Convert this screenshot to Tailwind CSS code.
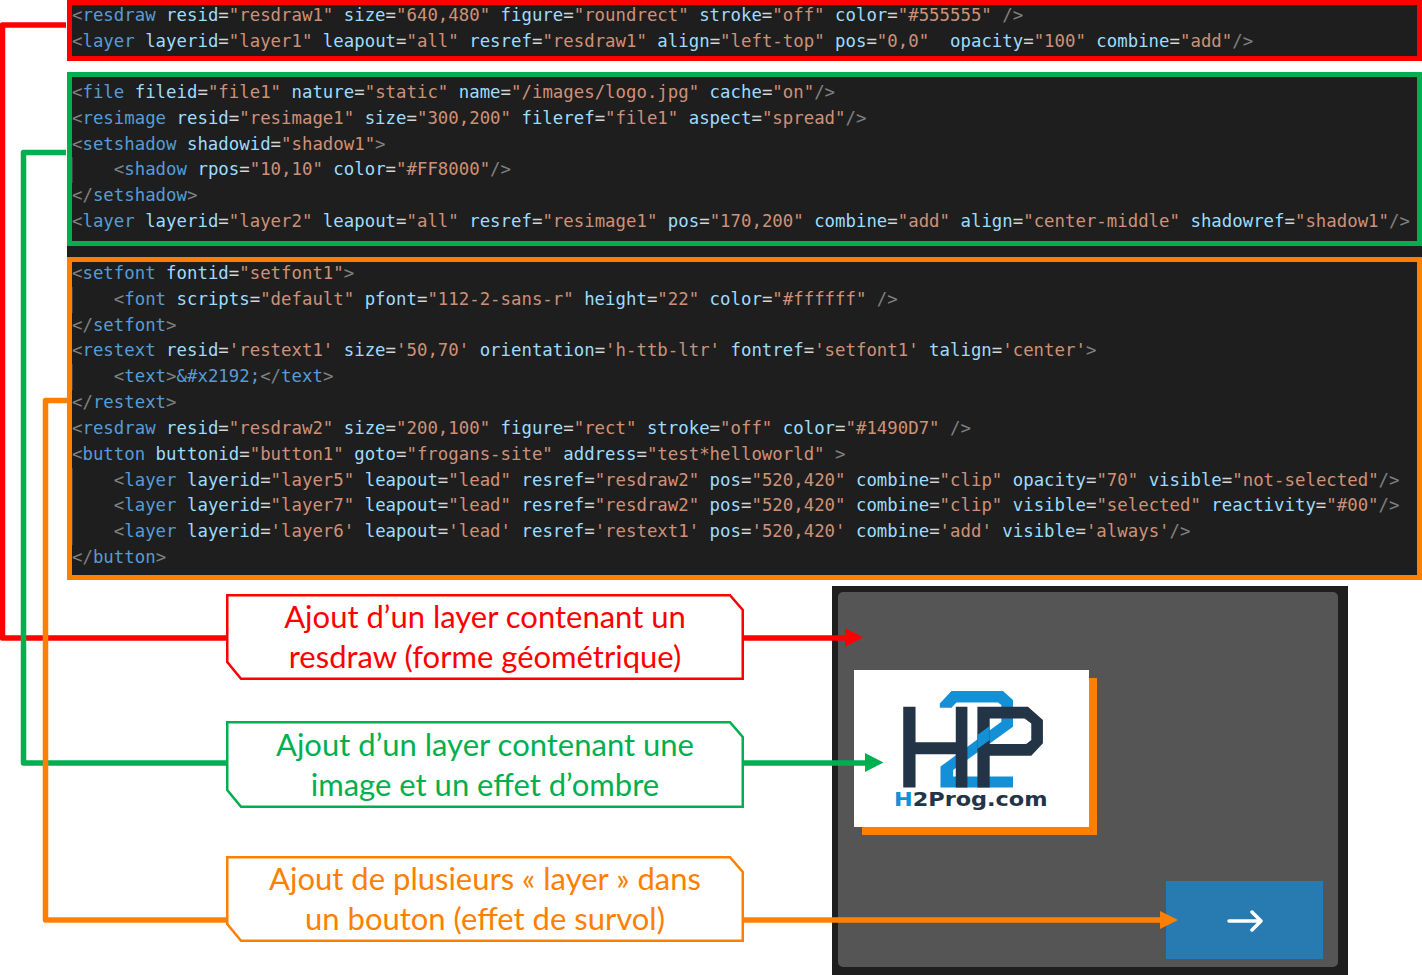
<!DOCTYPE html>
<html lang="fr">
<head>
    <meta charset="UTF-8">
    <title>Frogans layers</title>
    <script src="https://cdn.jsdelivr.net/npm/@tailwindcss/browser@4"></script>
</head>
<body class="bg-white h-screen overflow-hidden">
<div class="relative w-[1422px] h-[975px]">

    <!-- Blocs de code -->
    <div class="ml-[67px] font-['DejaVu_Sans_Mono',monospace] text-[17.38px] text-[#9cdcfe]">
        <div class="h-[61px] border-[5px] border-[#ff0000] bg-[#1e1e1e] overflow-hidden">
            <div id="codeRed" class="-mt-[3px] leading-[26px]"></div>
        </div>
        <div class="mt-[11px] bg-[#1e1e1e] h-[508px]">
            <div class="h-[174px] border-[5px] border-[#00b050] pt-[3px]">
                <div id="codeGreen" class="leading-[25.8px]"></div>
            </div>
            <div class="mt-[11px] h-[323px] border-[5px] border-[#ff8000]">
                <div id="codeOrange" class="-mt-[1px] leading-[25.82px]"></div>
            </div>
        </div>
    </div>

    <div class="flex">
        <!-- Légendes -->
        <div class="ml-[226px] w-[518px] pt-[14px] font-['Lato',sans-serif] text-[31px] leading-[40px] text-center">
            <div class="relative h-[86px] flex items-center justify-center text-[#ff0000]">
                <svg class="absolute inset-0 w-full h-full" viewBox="0 0 518 86"><polygon points="1.25,1.25 504,1.25 516.75,16 516.75,84.75 15,84.75 1.25,68" fill="#fff" stroke="#ff0000" stroke-width="2.5"/></svg>
                <p class="relative -mt-[2px]">Ajout d’un layer contenant un<br>resdraw (forme géométrique)</p>
            </div>
            <div class="relative h-[87px] mt-[41px] flex items-center justify-center text-[#00b050]">
                <svg class="absolute inset-0 w-full h-full" viewBox="0 0 518 87"><polygon points="1.25,1.25 504,1.25 516.75,16 516.75,85.75 15,85.75 1.25,69" fill="#fff" stroke="#00b050" stroke-width="2.5"/></svg>
                <p class="relative -mt-[2px]">Ajout d’un layer contenant une<br>image et un effet d’ombre</p>
            </div>
            <div class="relative h-[86px] mt-[48px] flex items-center justify-center text-[#ff8000]">
                <svg class="absolute inset-0 w-full h-full" viewBox="0 0 518 86"><polygon points="1.25,1.25 504,1.25 516.75,16 516.75,84.75 15,84.75 1.25,68" fill="#fff" stroke="#ff8000" stroke-width="2.5"/></svg>
                <p class="relative -mt-[2px]">Ajout de plusieurs « layer » dans<br>un bouton (effet de survol)</p>
            </div>
        </div>

        <!-- Rendu -->
        <div class="ml-[88px] mt-[6px] w-[516px] h-[389px] bg-[#1e1e1e] pt-[6px] pl-[6px]">
            <div class="w-[500px] h-[375px] bg-[#555555] rounded-[5px] flex flex-col justify-between pt-[78px] pl-[16px] pr-[15px] pb-[8px]">
                <div class="w-[234.5px] h-[157px] bg-white shadow-[8px_8px_0_#ff8000]">
                    <svg class="w-full h-full" viewBox="0 0 235 157">
                        <g transform="translate(41 15) scale(.3333)">
                            <path fill="#1490d7" d="M135 55 L170 18 H325 L355 45 V125 L175 255 V275 H355 V308 H137 V245 L320 110 V60 L310 52 H185 L170 68 H135 Z"/>
                            <path fill="#243447" d="M25 65 H62 V172 H183 V65 H218 V308 H183 V208 H62 V308 H25 Z"/>
                            <path fill="#243447" d="M248 65 H400 L445 105 V175 L410 212 H285 V308 H248 Z M285 100 V177 H395 L410 165 V115 L390 100 Z" fill-rule="evenodd"/>
                            <path fill="#1490d7" d="M248 150 L285 123 V165 L248 192 Z"/>
                        </g>
                        <text x="40" y="136.5" font-family="DejaVu Sans" font-weight="700" font-size="19" textLength="154" lengthAdjust="spacingAndGlyphs" fill="#243447"><tspan fill="#1490d7">H</tspan>2Prog.com</text>
                    </svg>
                </div>
                <div class="self-end w-[157px] h-[78px] bg-[#287bb0] flex items-center justify-center">
                    <svg class="w-[36px] h-[22px] mt-[2px]" viewBox="0 0 36 22" fill="none" stroke="#fff" stroke-width="3.5" stroke-linecap="round" stroke-linejoin="round">
                        <path d="M2 11 H34 M25 2 L34 11 L25 20"/>
                    </svg>
                </div>
            </div>
        </div>
    </div>

    <!-- Connecteurs et flèches -->
    <svg class="absolute inset-0 w-[1422px] h-[975px] pointer-events-none" viewBox="0 0 1422 975" fill="none" stroke-width="5.5" stroke-linejoin="round">
        <path stroke="#ff0000" d="M66 25 H2.5 V638 H226 M744 638 H850"/>
        <polygon fill="#ff0000" points="845,628 863,637.5 845,647"/>
        <path stroke="#00b050" d="M66 152.5 H23.5 V763 H226 M744 763 H870"/>
        <polygon fill="#00b050" points="865,753 883.5,762.5 865,772"/>
        <path stroke="#ff8000" d="M67 400.5 H45.5 V920 H226 M744 920 H1165"/>
        <polygon fill="#ff8000" points="1160,911 1178,920 1160,929"/>
    </svg>
</div>

<script>
    const codeRed = [
        `<resdraw resid="resdraw1" size="640,480" figure="roundrect" stroke="off" color="#555555" />`,
        `<layer layerid="layer1" leapout="all" resref="resdraw1" align="left-top" pos="0,0"  opacity="100" combine="add"/>`
    ];
    const codeGreen = [
        `<file fileid="file1" nature="static" name="/images/logo.jpg" cache="on"/>`,
        `<resimage resid="resimage1" size="300,200" fileref="file1" aspect="spread"/>`,
        `<setshadow shadowid="shadow1">`,
        `    <shadow rpos="10,10" color="#FF8000"/>`,
        `</setshadow>`,
        `<layer layerid="layer2" leapout="all" resref="resimage1" pos="170,200" combine="add" align="center-middle" shadowref="shadow1"/>`
    ];
    const codeOrange = [
        `<setfont fontid="setfont1">`,
        `    <font scripts="default" pfont="112-2-sans-r" height="22" color="#ffffff" />`,
        `</setfont>`,
        `<restext resid='restext1' size='50,70' orientation='h-ttb-ltr' fontref='setfont1' talign='center'>`,
        `    <text>&#x2192;</text>`,
        `</restext>`,
        `<resdraw resid="resdraw2" size="200,100" figure="rect" stroke="off" color="#1490D7" />`,
        `<button buttonid="button1" goto="frogans-site" address="test*helloworld" >`,
        `    <layer layerid="layer5" leapout="lead" resref="resdraw2" pos="520,420" combine="clip" opacity="70" visible="not-selected"/>`,
        `    <layer layerid="layer7" leapout="lead" resref="resdraw2" pos="520,420" combine="clip" visible="selected" reactivity="#00"/>`,
        `    <layer layerid='layer6' leapout='lead' resref='restext1' pos='520,420' combine='add' visible='always'/>`,
        `</button>`
    ];

    // Coloration syntaxique façon VS Code
    const tokenRe = /(<\/?)([a-z]+)|("[^"]*"|'[^']*')|(\/?>)|(=)|(&#x2192;)/g;

    function addSpan(parent, text, cls) {
        const s = document.createElement("span");
        s.textContent = text;
        if (cls) s.className = cls;
        parent.appendChild(s);
    }

    function renderLines(id, lines) {
        const box = document.getElementById(id);
        lines.forEach(line => {
            const row = document.createElement("div");
            row.className = line.startsWith("    ") ? "whitespace-pre shadow-[inset_1px_0_0_#404040]" : "whitespace-pre";
            let last = 0, m;
            tokenRe.lastIndex = 0;
            while ((m = tokenRe.exec(line))) {
                if (m.index > last) addSpan(row, line.slice(last, m.index));
                if (m[1]) { addSpan(row, m[1], "text-[#808080]"); addSpan(row, m[2], "text-[#569cd6]"); }
                else if (m[3]) addSpan(row, m[3], "text-[#ce9178]");
                else if (m[4]) addSpan(row, m[4], "text-[#808080]");
                else if (m[5]) addSpan(row, m[5], "text-[#d4d4d4]");
                else addSpan(row, m[6], "text-[#569cd6]");
                last = tokenRe.lastIndex;
            }
            if (last < line.length) addSpan(row, line.slice(last));
            box.appendChild(row);
        });
    }

    renderLines("codeRed", codeRed);
    renderLines("codeGreen", codeGreen);
    renderLines("codeOrange", codeOrange);
</script>
</body>
</html>
